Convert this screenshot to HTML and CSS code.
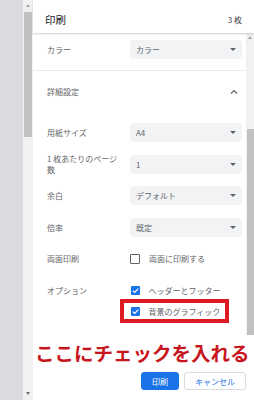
FILE: index.html
```html
<!DOCTYPE html>
<html lang="ja">
<head>
    <meta charset="UTF-8">
    <title>印刷</title>
    <link rel="stylesheet" href="styles.css">
</head>
<body>
<div class="window">
    <div class="gutter"></div>
    <div class="scrollbar outer">
        <span class="arrow up"></span>
        <div class="thumb"></div>
        <div class="spacer"></div>
        <span class="arrow down"></span>
    </div>
    <div class="dialog">
        <div class="header">
            <span class="title">印刷</span>
            <span class="count">3 枚</span>
        </div>
        <div class="body">
            <div class="settings">
                <div class="section first">
                    <div class="row">
                        <span class="label">カラー</span>
                        <div class="select">カラー<span class="caret"></span></div>
                    </div>
                </div>
                <div class="section">
                    <div class="more">
                        <span class="label">詳細設定</span>
                        <svg class="chevron" width="8" height="6" viewBox="0 0 8 6">
                            <path d="M1 4.5 L4 1.5 L7 4.5" fill="none" stroke="#5f6368" stroke-width="1.2"/>
                        </svg>
                    </div>
                    <div class="row">
                        <span class="label">用紙サイズ</span>
                        <div class="select">A4<span class="caret"></span></div>
                    </div>
                    <div class="row">
                        <span class="label">1 枚あたりのページ数</span>
                        <div class="select">1<span class="caret"></span></div>
                    </div>
                    <div class="row">
                        <span class="label">余白</span>
                        <div class="select">デフォルト<span class="caret"></span></div>
                    </div>
                    <div class="row">
                        <span class="label">倍率</span>
                        <div class="select">既定<span class="caret"></span></div>
                    </div>
                    <div class="row">
                        <span class="label">両面印刷</span>
                        <label class="check"><span class="box"></span>両面に印刷する</label>
                    </div>
                    <div class="row options">
                        <span class="label">オプション</span>
                        <div class="checks">
                            <label class="check"><span class="box on"></span>ヘッダーとフッター</label>
                            <label class="check"><span class="box on"></span>背景のグラフィック</label>
                            <div class="mark"></div>
                        </div>
                    </div>
                </div>
            </div>
            <div class="scrollbar inner">
                <span class="arrow up"></span>
                <div class="thumb"></div>
            </div>
        </div>
        <div class="note">ここにチェックを入れる</div>
        <div class="footer">
            <button class="btn primary">印刷</button>
            <button class="btn">キャンセル</button>
        </div>
    </div>
</div>
</body>
</html>
```

FILE: styles.css
```css
* {
    margin: 0;
    padding: 0;
    box-sizing: border-box;
}

body {
    width: 254px;
    height: 400px;
    overflow: hidden;
    font-family: "Noto Sans CJK JP", "Noto Sans", sans-serif;
    font-size: 8px;
    color: #5f6368;
    background: #dadce0;
}

.window {
    display: flex;
    height: 400px;
}

.gutter {
    width: 23px;
    background: #dadce0;
}

/* scrollbars */
.scrollbar {
    display: flex;
    flex-direction: column;
    align-items: center;
    background: #f1f1f1;
}

.scrollbar.outer {
    width: 10px;
}

.scrollbar.inner {
    width: 8px;
}

.arrow {
    display: block;
    width: 0;
    height: 0;
    border-left: 2.5px solid transparent;
    border-right: 2.5px solid transparent;
}

.arrow.up {
    border-bottom: 3px solid #a3a3a3;
}

.arrow.down {
    border-top: 3px solid #6e6e6e;
}

.outer .arrow.up {
    margin: 4px 0 5px;
}

.outer .arrow.down {
    margin: 0 0 5px;
}

.outer .thumb {
    width: 8px;
    height: 125px;
    background: #c1c1c1;
}

.spacer {
    flex: 1;
}

.inner .arrow.up {
    margin-top: 3px;
}

.inner .thumb {
    width: 7px;
    margin-top: 90px;
    flex: 1;
    background: #c1c1c1;
}

/* dialog */
.dialog {
    flex: 1;
    display: flex;
    flex-direction: column;
    background: #fff;
}

.header {
    height: 33px;
    display: flex;
    align-items: center;
    justify-content: space-between;
    padding: 5px 12px 0 12px;
    box-shadow: 0 1px 2px rgba(60, 64, 67, 0.25);
    position: relative;
    z-index: 1;
}

.title {
    font-size: 10.5px;
    color: #202124;
}

.count {
    font-size: 8px;
    color: #3c4043;
}

.body {
    display: flex;
    height: 302px;
}

.settings {
    flex: 1;
    overflow: hidden;
}

.section {
    border-top: 1px solid #ebebeb;
}

.section.first {
    border-top: none;
    padding: 1px 0 4px;
}

.row {
    height: 31.5px;
    display: flex;
    align-items: center;
    padding: 0 4px 0 14px;
}

.label {
    flex: 0 0 83px;
    padding-right: 10px;
    line-height: 11px;
    color: #5f6368;
}

.select {
    flex: 1;
    height: 19px;
    display: flex;
    align-items: center;
    justify-content: space-between;
    padding: 0 6px;
    border-radius: 4px;
    background: #f1f3f4;
    color: #5f6368;
}

.caret {
    width: 0;
    height: 0;
    border-left: 3px solid transparent;
    border-right: 3px solid transparent;
    border-top: 3px solid #5f6368;
}

.more {
    height: 42px;
    display: flex;
    align-items: center;
    justify-content: space-between;
    padding: 0 8px 0 14px;
    margin-bottom: 4.5px;
}

.check {
    display: flex;
    align-items: center;
    gap: 9px;
    height: 21px;
    color: #5f6368;
}

.box {
    width: 10px;
    height: 10px;
    border: 1.5px solid #5f6368;
    border-radius: 1px;
}

.box.on {
    width: 9px;
    height: 9px;
    border: none;
    background: #1a73e8 url("data:image/svg+xml;utf8,<svg xmlns='http://www.w3.org/2000/svg' viewBox='0 0 9 9'><path d='M1.8 4.6 L3.7 6.4 L7.3 2.6' fill='none' stroke='white' stroke-width='1.3'/></svg>") no-repeat center;
    margin-left: 0.5px;
}

.options {
    height: auto;
    align-items: flex-start;
    padding-top: 5.5px;
}

.options .label {
    line-height: 21px;
}

.checks {
    position: relative;
}

/* red frame around the second option */
.mark {
    position: absolute;
    left: -10px;
    top: 19px;
    width: 109px;
    height: 24px;
    border: 4px solid #dd1a22;
}

.note {
    height: 35px;
    line-height: 35px;
    padding-left: 2px;
    font-size: 19.5px;
    font-weight: bold;
    color: #c8161e;
    white-space: nowrap;
}

.footer {
    flex: 1;
    display: flex;
    justify-content: flex-end;
    align-items: flex-start;
    gap: 5px;
    padding: 2px 8px 0 0;
}

.btn {
    height: 18px;
    padding: 0 10px;
    border: 1px solid #dadce0;
    border-radius: 3px;
    background: #fff;
    color: #1a73e8;
    font-family: "Noto Sans CJK JP", "Noto Sans", sans-serif;
    font-size: 8px;
}

.btn.primary {
    width: 38px;
    background: #1a73e8;
    border-color: #1a73e8;
    color: #fff;
}
```
